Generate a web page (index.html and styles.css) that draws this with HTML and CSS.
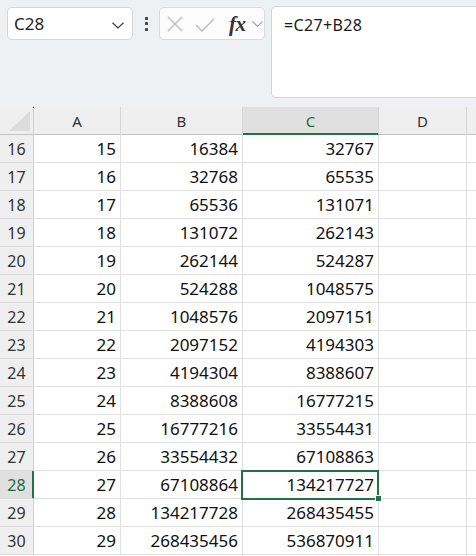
FILE: index.html
```html
<!DOCTYPE html>
<html>
<head>
<meta charset="utf-8">
<link rel="stylesheet" href="styles.css">
</head>
<body>
<div class="app">
  <div class="toolbar">
    <div class="namebox">
      <span class="name">C28</span>
      <svg class="chev" width="12" height="7" viewBox="0 0 12 7"><polyline points="0.5,0.8 6,6 11.5,0.8" fill="none" stroke="#3a3a3a" stroke-width="1.2"/></svg>
    </div>
    <div class="dots"><span></span><span></span><span></span></div>
    <div class="fnbox">
      <svg class="ico-x" width="16" height="16" viewBox="0 0 16 16"><path d="M1 1 L15 15 M15 1 L1 15" stroke="#b9b9b9" stroke-width="1.3" fill="none"/></svg>
      <svg class="ico-ok" width="20" height="14" viewBox="0 0 20 14"><polyline points="1,7 7,13 19,1" fill="none" stroke="#b9b9b9" stroke-width="1.3"/></svg>
      <span class="fx">fx</span>
      <svg class="chev2" width="11" height="6" viewBox="0 0 11 6"><polyline points="0.5,0.6 5.5,5.4 10.5,0.6" fill="none" stroke="#9a9a9a" stroke-width="1.1"/></svg>
    </div>
    <div class="formula">=C27+B28</div>
  </div>
  <div class="grid">
    <div class="corner"><svg width="34" height="27" viewBox="0 0 34 27"><polygon points="9,24 30,24 30,4" fill="#dcdcdc"/></svg></div>
    <div class="ch">A</div><div class="ch">B</div><div class="ch sel">C</div><div class="ch">D</div><div class="ch last"></div>

    <div class="rh">16</div><div class="c">15</div><div class="c">16384</div><div class="c">32767</div><div class="c"></div><div class="c last"></div>
    <div class="rh">17</div><div class="c">16</div><div class="c">32768</div><div class="c">65535</div><div class="c"></div><div class="c last"></div>
    <div class="rh">18</div><div class="c">17</div><div class="c">65536</div><div class="c">131071</div><div class="c"></div><div class="c last"></div>
    <div class="rh">19</div><div class="c">18</div><div class="c">131072</div><div class="c">262143</div><div class="c"></div><div class="c last"></div>
    <div class="rh">20</div><div class="c">19</div><div class="c">262144</div><div class="c">524287</div><div class="c"></div><div class="c last"></div>
    <div class="rh">21</div><div class="c">20</div><div class="c">524288</div><div class="c">1048575</div><div class="c"></div><div class="c last"></div>
    <div class="rh">22</div><div class="c">21</div><div class="c">1048576</div><div class="c">2097151</div><div class="c"></div><div class="c last"></div>
    <div class="rh">23</div><div class="c">22</div><div class="c">2097152</div><div class="c">4194303</div><div class="c"></div><div class="c last"></div>
    <div class="rh">24</div><div class="c">23</div><div class="c">4194304</div><div class="c">8388607</div><div class="c"></div><div class="c last"></div>
    <div class="rh">25</div><div class="c">24</div><div class="c">8388608</div><div class="c">16777215</div><div class="c"></div><div class="c last"></div>
    <div class="rh">26</div><div class="c">25</div><div class="c">16777216</div><div class="c">33554431</div><div class="c"></div><div class="c last"></div>
    <div class="rh">27</div><div class="c">26</div><div class="c">33554432</div><div class="c">67108863</div><div class="c"></div><div class="c last"></div>
    <div class="rh sel">28</div><div class="c">27</div><div class="c">67108864</div><div class="c active">134217727<span class="handle"></span></div><div class="c"></div><div class="c last"></div>
    <div class="rh">29</div><div class="c">28</div><div class="c">134217728</div><div class="c">268435455</div><div class="c"></div><div class="c last"></div>
    <div class="rh">30</div><div class="c">29</div><div class="c">268435456</div><div class="c">536870911</div><div class="c"></div><div class="c last"></div>
  </div>
</div>
</body>
</html>
```
FILE: styles.css
```css
html, body {
  margin: 0;
  padding: 0;
  background: #ffffff;
  overflow: hidden;
}
body {
  font-family: "Noto Sans", "Open Sans", sans-serif;
  color: #1a1a1a;
}
.app {
  width: 476px;
  height: 556px;
  overflow: hidden;
}
.toolbar {
  height: 107px;
  box-sizing: border-box;
  background: linear-gradient(90deg, #eef0f1 0%, #eef1f2 60%, #edf1f3 100%);
  display: flex;
  align-items: flex-start;
  padding: 7px 0 0 7px;
}
.namebox {
  width: 126px;
  height: 33px;
  box-sizing: border-box;
  background: #ffffff;
  border: 1px solid #d4d6d8;
  border-radius: 5px;
  display: flex;
  align-items: flex-start;
  padding: 6px 0 0 6px;
}
.name {
  font-size: 17px;
  line-height: 20px;
  color: #1f1f1f;
  flex: 1;
}
.chev {
  margin: 8px 8px 0 0;
}
.dots {
  width: 26px;
  height: 33px;
  display: flex;
  flex-direction: column;
  align-items: center;
  justify-content: center;
  gap: 2.5px;
}
.dots span {
  width: 3px;
  height: 3px;
  background: #4a4a4a;
  border-radius: 0.5px;
}
.fnbox {
  width: 106px;
  height: 33px;
  box-sizing: border-box;
  background: #fcfcfc;
  border: 1px solid #d8dadb;
  border-radius: 5px;
  display: flex;
  align-items: center;
  padding-left: 7px;
}
.ico-x {
  margin-top: 0;
}
.ico-ok {
  margin-left: 12px;
  margin-top: 2px;
}
.fx {
  font-family: "Liberation Serif", "DejaVu Serif", serif;
  font-style: italic;
  font-weight: bold;
  font-size: 21px;
  line-height: 20px;
  color: #333333;
  margin-left: 14px;
  letter-spacing: -0.5px;
}
.chev2 {
  margin-left: 6px;
  margin-top: 1px;
}
.formula {
  flex: 1;
  margin-left: 6px;
  margin-top: -1px;
  margin-right: -12px;
  height: 92px;
  box-sizing: border-box;
  background: #ffffff;
  border: 1px solid #d2d5d7;
  border-radius: 5px;
  font-size: 16px;
  line-height: 20px;
  letter-spacing: 0.35px;
  padding: 8px 0 0 12px;
  color: #1a1a1a;
}
.grid {
  display: grid;
  grid-template-columns: 34px 87px 122px 136px 88px 1fr;
  grid-auto-rows: 28px;
}
.grid > div {
  box-sizing: border-box;
  border-right: 1px solid #e0e0e0;
  border-bottom: 1px solid #e0e0e0;
}
.corner {
  background: #efefef;
  position: relative;
  border-right-color: #d0d0d0 !important;
  border-bottom-color: #c4c4c4 !important;
}
.corner svg {
  display: block;
}
.corner::before {
  content: "";
  position: absolute;
  right: -1px;
  top: 0;
  width: 1px;
  height: 1px;
  background: #000;
}
.ch {
  background: #efefef;
  border-right-color: #d6d6d6 !important;
  border-bottom-color: #c4c4c4 !important;
  font-size: 15px;
  line-height: 20px;
  color: #333333;
  display: flex;
  align-items: center;
  justify-content: center;
}
.ch.sel {
  background: #e0e0e0;
  color: #1d6b42;
  border-bottom-color: #217346 !important;
  box-shadow: inset 0 -1px 0 #217346;
}
.ch.last {
  border-right: none !important;
}
.rh {
  background: #efefef;
  border-right-color: #d0d0d0 !important;
  border-bottom-color: #dcdcdc !important;
  font-size: 16px;
  line-height: 20px;
  color: #333333;
  display: flex;
  align-items: center;
  justify-content: center;
}
.rh.sel {
  background: #e0e0e0;
  color: #1d6b42;
  border-right-color: #217346 !important;
  box-shadow: inset -1px 0 0 #217346;
}
.c {
  background: #ffffff;
  font-size: 17px;
  line-height: 20px;
  color: #111111;
  display: flex;
  align-items: center;
  justify-content: flex-end;
  padding-right: 4px;
}
.c.last {
  border-right: none !important;
}
.c.active {
  position: relative;
}
.c.active::after {
  content: "";
  position: absolute;
  left: -2px;
  top: -1px;
  width: 138px;
  height: 30px;
  box-sizing: border-box;
  border: 2px solid #217346;
  pointer-events: none;
}
.handle {
  position: absolute;
  right: -3px;
  bottom: -3px;
  width: 5px;
  height: 5px;
  background: #217346;
  box-shadow: 0 0 0 1px #ffffff;
  z-index: 2;
}
```
